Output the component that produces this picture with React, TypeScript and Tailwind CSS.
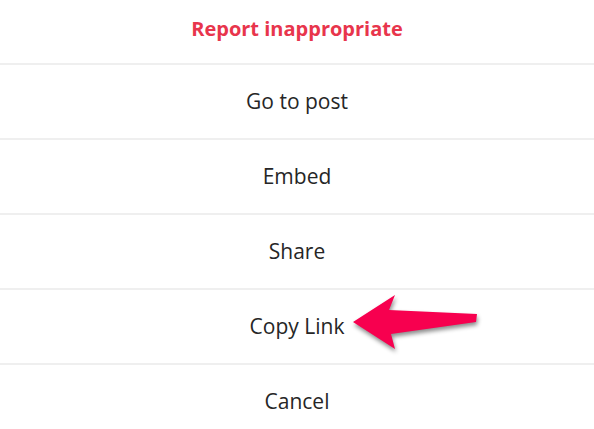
const items = ['Go to post', 'Embed', 'Share', 'Copy Link', 'Cancel'];

export default function App() {
  return (
    <div className="relative w-[594px] h-[429px] overflow-hidden bg-white" style={{ fontFamily: '"Open Sans", "Noto Sans", sans-serif' }}>
      <div className="-mt-[12px] flex flex-col">
        {/* Top action */}
        <button className="h-[75px] pt-[6px] flex items-center justify-center text-[20px] font-bold text-[#e8354c]">
          Report inappropriate
        </button>

        {items.map((label) => (
          <div key={label} className="border-t-2 border-[#efefef]">
            <button className="w-full h-[73px] flex items-center justify-center text-[21px] text-[#262626]">
              {label}
            </button>
          </div>
        ))}
      </div>

      {/* Pointer arrow */}
      <svg
        className="absolute left-[340px] top-[284px] drop-shadow-[1px_3px_2px_rgba(0,0,0,0.45)]"
        width="150"
        height="75"
        viewBox="340 284 150 75"
      >
        <polygon points="353,322 395,295 389,310 477,314 476,322 391,334 395,349" fill="#f7004f" />
      </svg>
    </div>
  );
}
